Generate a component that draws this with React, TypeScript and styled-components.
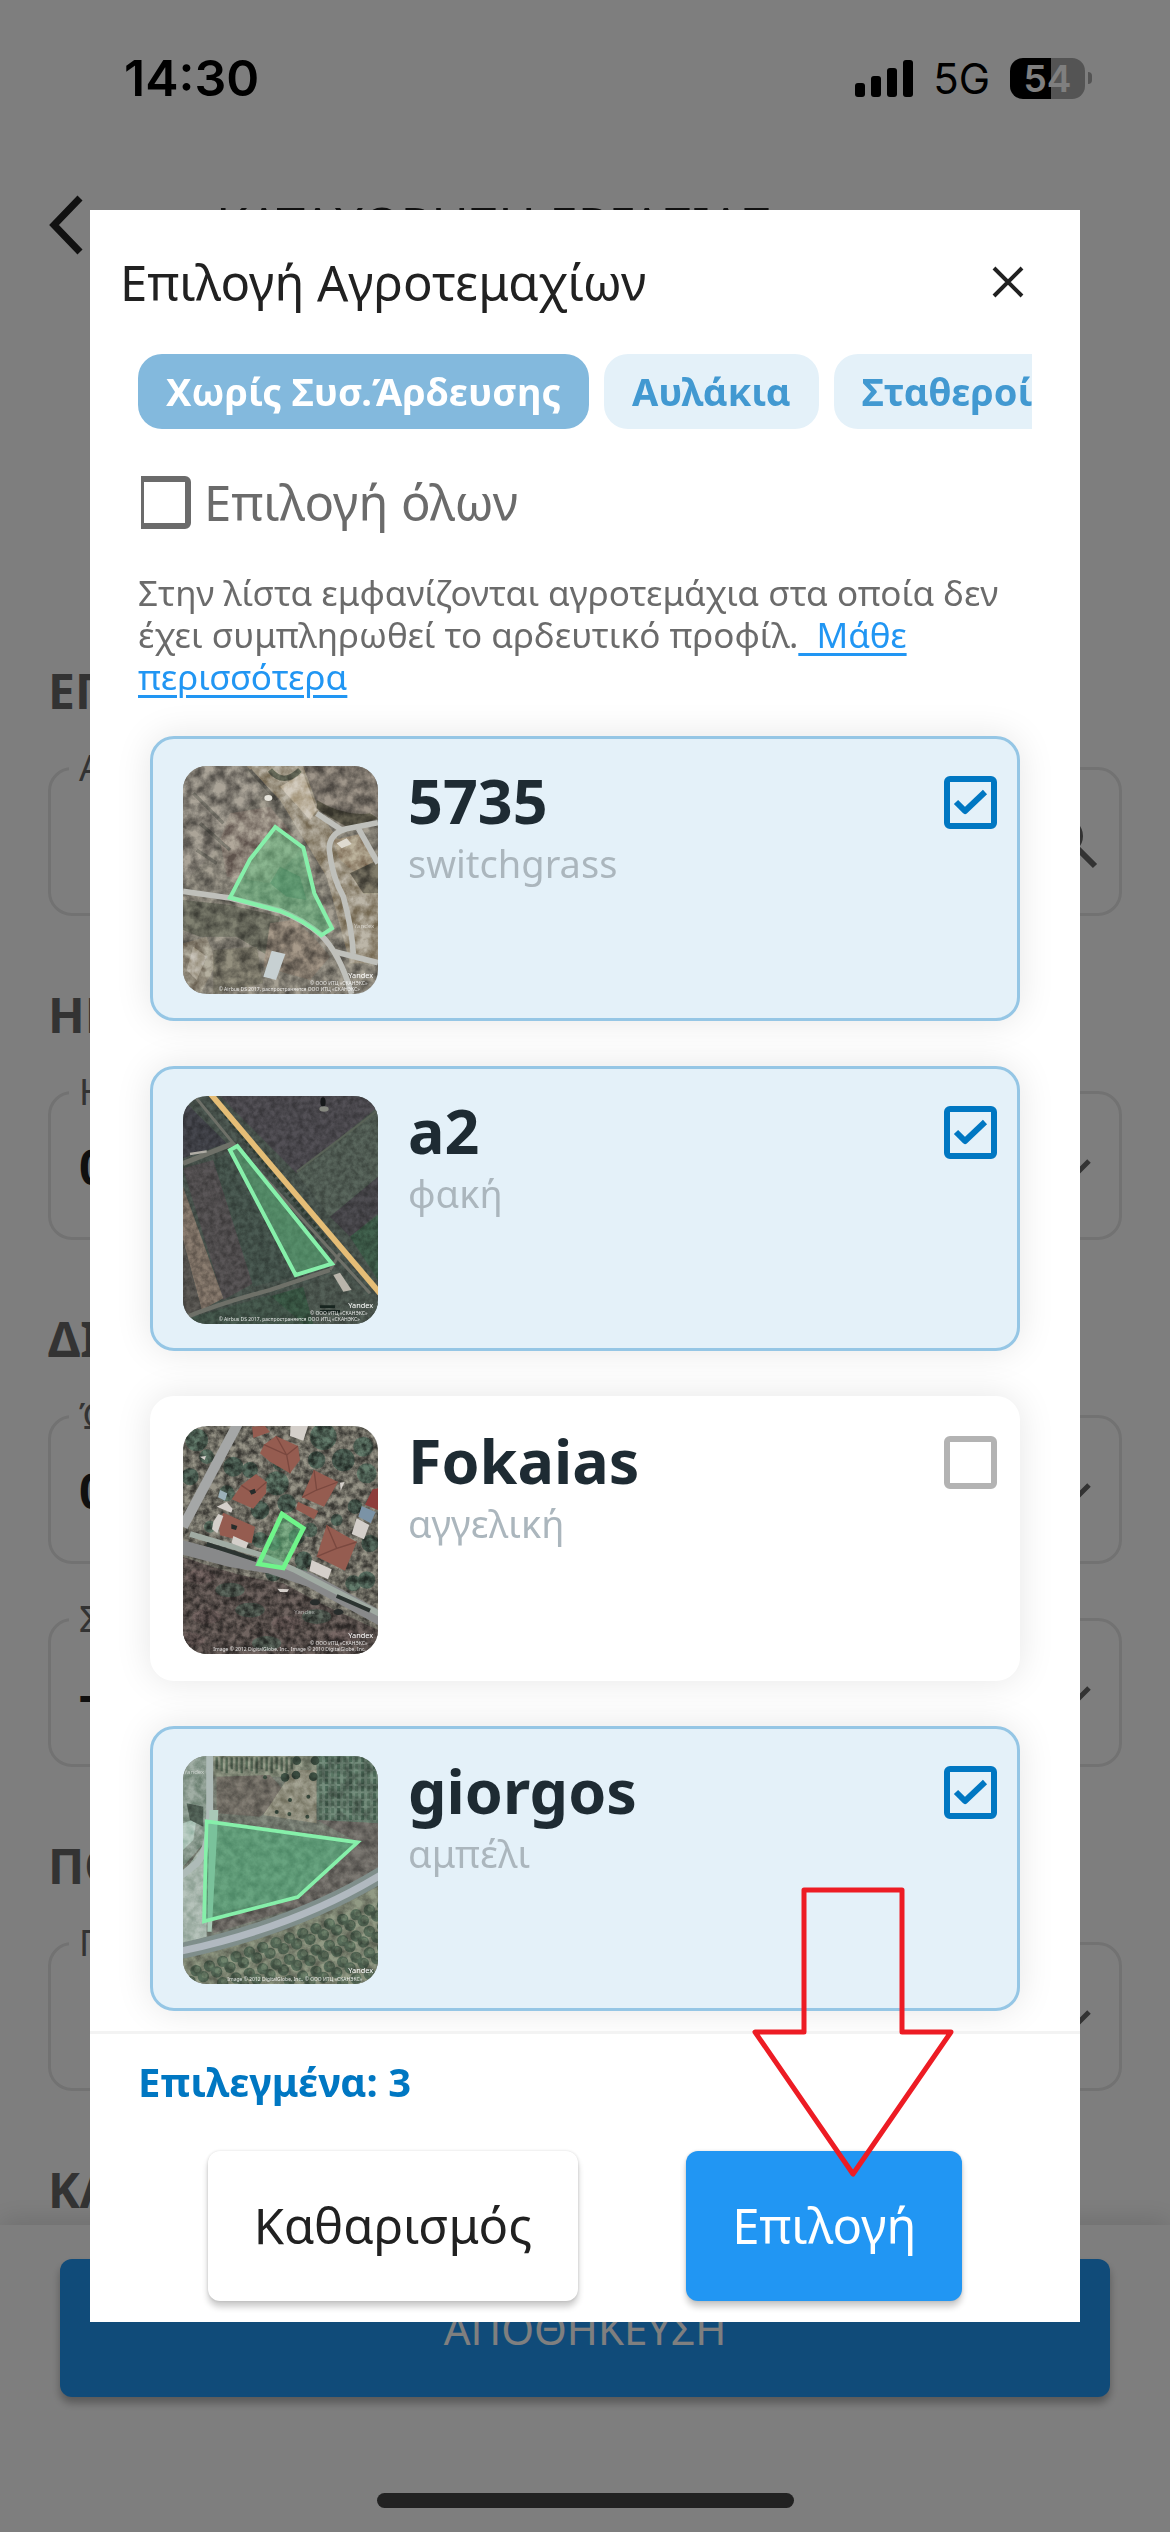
import React, { useState } from "react";
import styled, { createGlobalStyle } from "styled-components";

const GlobalStyle = createGlobalStyle`
  *, *::before, *::after { box-sizing: border-box; }
  body {
    margin: 0;
    background: #fdfdfd;
    font-family: "Noto Sans", "Open Sans", sans-serif;
    color: #212121;
  }
  button, input { font-family: inherit; }
  h1, h2, h3, p, ul { margin: 0; padding: 0; }
`;

/* ---------- page behind the dialog ---------- */

const Screen = styled.div`
  min-height: 100vh;
  display: flex;
  flex-direction: column;
  overflow: hidden;
`;

const StatusBar = styled.header`
  display: flex;
  align-items: center;
  justify-content: space-between;
  height: 156px;
  padding: 0 78px 0 124px;
  font-family: Inter, "Liberation Sans", sans-serif;
  color: #000;
`;

const Clock = styled.span`
  font-size: 50px;
  font-weight: 600;
`;

const StatusIcons = styled.div`
  display: flex;
  align-items: center;
  gap: 20px;
`;

const Network = styled.span`
  font-size: 42px;
  font-weight: 400;
`;

const Battery = styled.div`
  display: flex;
  align-items: center;
  gap: 3px;
`;

const BatteryBody = styled.span`
  width: 75px;
  height: 41px;
  border-radius: 13px;
  background: linear-gradient(90deg, #000 55%, #a8a8a8 55%);
  color: #fff;
  font-size: 37px;
  line-height: 41px;
  font-weight: 600;
  text-align: center;
`;

const BatteryTip = styled.span`
  width: 4px;
  height: 12px;
  border-radius: 0 4px 4px 0;
  background: #a8a8a8;
`;

const NavBar = styled.div`
  display: flex;
  align-items: center;
  height: 138px;
  padding: 0 48px;
  gap: 132px;
`;

const BackButton = styled.button`
  display: flex;
  padding: 0;
  border: 0;
  background: none;
`;

const NavTitle = styled.h1`
  font-size: 51px;
  font-weight: 400;
  line-height: 60px;
  white-space: nowrap;
  color: #222;
`;

const Form = styled.main`
  flex: 1;
  display: flex;
  flex-direction: column;
  gap: 77px;
  padding: 375px 48px 0;
`;

const Section = styled.section`
  display: flex;
  flex-direction: column;
  gap: 31px;
`;

const SectionTitle = styled.h2`
  font-size: 48px;
  font-weight: 700;
  line-height: 44px;
  color: #666;
`;

const Field = styled.fieldset`
  display: flex;
  align-items: flex-start;
  margin: 0;
  height: 172px;
  min-width: 0;
  padding: 18px 20px 0 18px;
  border: 3px solid #e4e4e4;
  border-radius: 24px;
`;

const FieldLegend = styled.legend`
  padding: 0 10px;
  font-size: 36px;
  line-height: 48px;
  color: #666;
`;

const FieldInput = styled.input`
  flex: 1;
  min-width: 0;
  height: 64px;
  padding: 0 0 0 10px;
  border: 0;
  outline: 0;
  background: transparent;
  font-size: 48px;
  font-weight: 700;
  color: #212121;
`;

const SaveBar = styled.footer`
  display: flex;
  flex-direction: column;
  align-items: center;
  justify-content: space-between;
  height: 307px;
  padding: 34px 60px 24px;
  background: #fdfdfd;
  box-shadow: 0 -6px 24px rgba(0, 0, 0, 0.12);
`;

const SaveButton = styled.button`
  width: 100%;
  height: 138px;
  border: 0;
  border-radius: 12px;
  background: #2196f3;
  color: #fff;
  font-size: 42px;
  box-shadow: 0 6px 9px rgba(0, 0, 0, 0.3);
`;

const HomeIndicator = styled.div`
  width: 417px;
  height: 15px;
  border-radius: 8px;
  background: #444;
`;

/* ---------- dialog ---------- */

const Scrim = styled.div`
  position: fixed;
  inset: 0;
  padding: 210px 90px;
  background: rgba(0, 0, 0, 0.5);
`;

const Dialog = styled.section`
  display: flex;
  flex-direction: column;
  height: 100%;
  background: #fff;
  overflow: hidden;
`;

const DialogHeader = styled.div`
  display: flex;
  align-items: center;
  justify-content: space-between;
  height: 144px;
  padding-left: 30px;
`;

const DialogTitle = styled.h2`
  font-size: 49px;
  font-weight: 400;
  line-height: 60px;
`;

const CloseButton = styled.button`
  display: grid;
  place-items: center;
  width: 144px;
  height: 144px;
  border: 0;
  background: none;
`;

const ChipRow = styled.div`
  display: flex;
  gap: 15px;
  margin: 0 48px;
  overflow: hidden;
`;

const Chip = styled.button<{ $active?: boolean }>`
  flex: none;
  height: 75px;
  padding: 0 28px 2px;
  border: 0;
  border-radius: 24px;
  background: ${(p) => (p.$active ? "#83b9dd" : "#e4f1f9")};
  color: ${(p) => (p.$active ? "#fff" : "#4299d1")};
  font-size: 38px;
  font-weight: 700;
  white-space: nowrap;
`;

const CheckBox = styled.input`
  appearance: none;
  flex: none;
  width: 53px;
  height: 53px;
  margin: 0;
  border: 6px solid ${(p) => (p.checked ? "#0077c2" : "#b3b3b3")};
  border-radius: 6px;
  background: ${(p) =>
    p.checked
      ? `url("data:image/svg+xml,%3Csvg xmlns='http://www.w3.org/2000/svg' viewBox='0 0 41 41'%3E%3Cpath d='M6 20 L15 29 L35 10' fill='none' stroke='%230077c2' stroke-width='6' stroke-linejoin='round'/%3E%3C/svg%3E") center / 41px 41px no-repeat`
      : "transparent"};
`;

const SelectAll = styled.label`
  display: flex;
  align-items: center;
  gap: 13px;
  height: 143px;
  margin: 0 48px;
  padding-top: 3px;
  font-size: 49px;
  color: #6b6b6b;

  ${CheckBox} {
    width: 50px;
    margin-left: 3px;
    border-color: #6b6b6b;
    border-left-width: 3px;
    border-radius: 0 6px 6px 0;
  }
`;

const Hint = styled.p`
  margin: 0 48px;
  font-size: 35px;
  line-height: 42px;
  color: #6b6b6b;
`;

const HintLink = styled.a`
  color: #2196f3;
  text-decoration: underline;
  text-decoration-thickness: 3px;
  text-underline-offset: 5px;
`;

const PlotList = styled.ul`
  flex: 1;
  min-height: 0;
  display: flex;
  flex-direction: column;
  gap: 45px;
  padding: 38px 60px 0;
  overflow: hidden;
  list-style: none;
`;

const PlotCard = styled.li<{ $selected: boolean }>`
  flex: none;
  border: 3px solid ${(p) => (p.$selected ? "#95c6e5" : "#fff")};
  border-radius: 24px;
  background: ${(p) => (p.$selected ? "#e4f1f9" : "#fff")};
  box-shadow: 0 0 36px rgba(0, 0, 0, 0.1);
`;

const PlotLabel = styled.label`
  display: flex;
  align-items: flex-start;
  height: 279px;
  padding: 27px 20px 24px 30px;
`;

const Thumb = styled.svg`
  flex: none;
  width: 195px;
  height: 228px;
  border-radius: 24px;
`;

const GrainRect = styled.rect`
  mix-blend-mode: overlay;
`;

const PlotText = styled.div`
  flex: 1;
  min-width: 0;
  margin: 0 30px;
`;

const PlotName = styled.h3`
  font-size: 61px;
  font-weight: 700;
  line-height: 70px;
  color: #1e2b33;
`;

const PlotCrop = styled.p`
  font-size: 38px;
  line-height: 54px;
  color: #abb6bd;
`;

const CheckSlot = styled.span`
  display: flex;
  padding-top: 10px;
`;

const DialogFooter = styled.div`
  height: 291px;
  border-top: 3px solid #f3f3f3;
`;

const Count = styled.p`
  height: 117px;
  padding: 0 48px;
  font-size: 40px;
  font-weight: 700;
  line-height: 96px;
  color: #0077c2;
`;

const Actions = styled.div`
  display: flex;
  justify-content: center;
  gap: 108px;
`;

const ActionButton = styled.button<{ $primary?: boolean }>`
  height: 150px;
  padding: 0 46px 2px;
  border: 0;
  border-radius: 12px;
  background: ${(p) => (p.$primary ? "#2196f3" : "#fff")};
  color: ${(p) => (p.$primary ? "#fff" : "#212121")};
  font-size: 49px;
  box-shadow: 0 6px 6px rgba(0, 0, 0, 0.2), 0 0 3px rgba(0, 0, 0, 0.15);
`;

const Arrow = styled.svg`
  position: fixed;
  left: 751px;
  top: 1885px;
  width: 204px;
  height: 296px;
  pointer-events: none;
`;

/* ---------- satellite thumbnails ---------- */

type Line = [number, number, string];

const Credit = ({ lines, yandexY = 683 }: { lines: Line[]; yandexY?: number }) => (
  <g fontFamily="Noto Sans, sans-serif" fill="#fff">
    <text x="535" y={yandexY} fontSize="22">Yandex</text>
    {lines.map(([x, y, t]) => (
      <text key={y} x={x} y={y} fontSize="15" opacity="0.85">{t}</text>
    ))}
  </g>
);

const Grain = ({ id, freq, seed, strength }: { id: string; freq: number; seed: number; strength: number }) => (
  <>
    <filter id={id} x="0" y="0" width="100%" height="100%" colorInterpolationFilters="sRGB">
      <feTurbulence type="fractalNoise" baseFrequency={freq} numOctaves={4} seed={seed} />
      <feColorMatrix type="matrix" values="2 0 0 0 -0.45  2 0 0 0 -0.45  2 0 0 0 -0.45  0 0 0 0 1" />
    </filter>
    <GrainRect x="39" y="48" width="585" height="684" filter={`url(#${id})`} opacity={strength} />
  </>
);

const parcel = { stroke: "#86f0aa", strokeWidth: 12, fill: "#5fca86", fillOpacity: 0.45 };

const MapHill = () => (
  <Thumb viewBox="39 48 585 684" aria-hidden="true">
    <rect x="39" y="48" width="585" height="684" fill="#7b776d" />
    <path d="M39 48H210L280 120L210 190L120 320L39 400Z" fill="#7f7a71" />
    <path d="M180 190L300 170L400 290L300 400L170 380L150 270Z" fill="#877d73" />
    <path d="M230 48H400L450 190L520 290L624 420V640H540L470 380L330 150Z" fill="#988f7d" />
    <path d="M330 110L400 70L440 180L420 210Z" fill="#bbb09c" />
    <path d="M400 48H624V200L530 235L450 180Z" fill="#766f66" />
    <path d="M440 150Q520 200 600 190L624 205L540 235Q470 200 440 175Z" fill="#504d40" />
    <path d="M490 270L580 250L610 340L560 370L510 330Z" fill="#988a74" />
    <path d="M540 370L624 330V430L580 430Z" fill="#5f5b4e" />
    <path d="M39 450L180 465L330 500L300 620L200 560L90 560L39 540Z" fill="#5f6054" />
    <path d="M300 520L370 510L430 560L480 620L420 690L280 650Z" fill="#7c7266" />
    <path d="M39 580L110 560L140 640L90 732H39Z" fill="#8d8677" />
    <path d="M70 590L110 620L80 690L50 660Z" fill="#aca596" />
    <path d="M130 600L260 590L280 700L130 732Z" fill="#6e6b5e" />
    <path d="M240 60L320 150M70 130L160 220M90 220L180 300M80 300L140 340" stroke="#615f57" strokeWidth="10" fill="none" />
    <path d="M300 60Q340 110 390 60" stroke="#55584a" strokeWidth="16" fill="none" />
    <Grain id="g1" freq={0.03} seed={4} strength={0.35} />
    <path d="M280 680L305 602L346 612L318 690Z" fill="#c7d0d2" />
    <ellipse cx="295" cy="144" rx="12" ry="9" fill="#e6e4dc" />
    <path d="M500 280L530 265L545 282L515 295Z" fill="#dedad0" />
    <g fill="none" stroke="#bfc0bb" strokeWidth="17">
      <path d="M39 424L180 444L330 482Q400 510 450 552Q510 610 545 732" />
      <path d="M624 218L530 236Q476 250 478 300Q486 380 520 440Q545 530 550 612" />
      <path d="M565 235L624 340" />
      <path d="M495 605L624 638" />
      <path d="M440 190L515 240" />
    </g>
    <path d="M316 231L400 293L433 430L486 535L454 556Q400 510 330 483L180 443L240 328Z" {...parcel} />
    <path d="M330 350L390 380L410 450L350 440L300 400Z" fill="#2d7d52" opacity="0.3" />
    <text x="552" y="534" fontSize="18" fill="#fff" opacity="0.5" fontFamily="Noto Sans, sans-serif">Yandex</text>
    <Credit lines={[[420, 706, "© ООО ИТЦ «СКАНЭКС»"], [146, 724, "© Airbus DS 2017, распространяется ООО ИТЦ «СКАНЭКС»"]]} />
  </Thumb>
);

const MapFields = () => (
  <Thumb viewBox="39 48 585 684" aria-hidden="true">
    <rect x="39" y="48" width="585" height="684" fill="#444e48" />
    <path d="M150 48H624V80L380 280Z" fill="#464449" />
    <path d="M380 280L624 90V290L480 410Z" fill="#4c574f" />
    <path d="M480 410L624 290V400L540 470Z" fill="#424145" />
    <path d="M540 470L624 405V600Z" fill="#385443" />
    <path d="M39 60L170 190L39 235Z" fill="#3b3c42" />
    <path d="M39 265L130 240L250 610L160 660Z" fill="#4c494a" />
    <path d="M130 240L180 215L370 590L250 620Z" fill="#3f4d46" />
    <path d="M39 320L160 655L95 690L39 480Z" fill="#766a5f" />
    <path d="M39 480L95 690L39 710Z" fill="#504e4a" />
    <path d="M280 655L400 620L430 732H290Z" fill="#344f3e" />
    <path d="M39 720L300 645L400 732H39Z" fill="#3d4e44" />
    <path d="M400 620L500 570L624 670V732H430Z" fill="#47514a" />
    <Grain id="g2" freq={0.06} seed={9} strength={0.18} />
    <g fill="none" stroke="#6e7068" strokeWidth="9">
      <path d="M75 50L190 190L600 640" />
      <path d="M39 250L190 190" strokeWidth="15" />
      <path d="M39 715Q150 670 300 630L480 570" strokeWidth="13" />
      <path d="M380 275L624 90" strokeWidth="6" stroke="#596257" />
      <path d="M480 570L510 520" />
    </g>
    <path d="M60 222L110 214" stroke="#b0ada5" strokeWidth="7" />
    <path d="M490 585L510 578L545 630L520 635Z" fill="#b9b5ab" />
    <ellipse cx="459" cy="66" rx="8" ry="14" fill="#16181a" />
    <ellipse cx="462" cy="87" rx="14" ry="8" fill="#85877f" />
    <path d="M450 680h45M450 694h60" stroke="#17241f" strokeWidth="8" />
    <path d="M155 92L470 480" stroke="#2c3a31" strokeWidth="10" strokeDasharray="10 9" />
    <path d="M122 42L630 640" stroke="#e5bd76" strokeWidth="17" />
    <path d="M202 198L486 551L377 585L180 210Z" {...parcel} />
    <Credit lines={[[420, 706, "© ООО ИТЦ «СКАНЭКС»"], [146, 724, "© Airbus DS 2017, распространяется ООО ИТЦ «СКАНЭКС»"]]} />
  </Thumb>
);

const trees: [number, number, number][] = [
  [80, 90, 34], [60, 200, 26], [110, 140, 22], [190, 170, 30], [170, 250, 24], [240, 180, 24], [320, 220, 36], [350, 280, 28],
  [460, 80, 40], [520, 150, 34], [580, 110, 30], [440, 150, 26], [590, 190, 30], [555, 290, 22], [330, 160, 22], [270, 300, 28],
  [270, 390, 24], [380, 380, 24], [420, 360, 22], [400, 450, 26], [550, 520, 24], [590, 510, 26], [120, 350, 18], [600, 400, 26],
  [310, 400, 22], [500, 330, 18], [390, 490, 24], [310, 490, 24], [130, 430, 16],
];

const shrubs: [number, number][] = [
  [90, 500], [180, 540], [110, 620], [240, 600], [350, 640], [440, 620], [520, 680], [290, 700], [60, 690],
];

const MapHouses = () => (
  <Thumb viewBox="39 48 585 684" aria-hidden="true">
    <rect x="39" y="48" width="585" height="684" fill="#68665d" />
    <path d="M39 440Q200 500 340 520L450 580L624 660V732H39Z" fill="#4d4542" />
    {trees.map(([x, y, r], i) => (
      <circle key={i} cx={x} cy={y} r={r} fill={i % 2 ? "#3c4b42" : "#45564b"} />
    ))}
    {shrubs.map(([x, y], i) => (
      <ellipse key={i} cx={x} cy={y} rx="44" ry="22" fill={i % 2 ? "#414942" : "#524745"} />
    ))}
    <Grain id="g3" freq={0.05} seed={12} strength={0.45} />
    <path d="M204 40L39 350" stroke="#a5a7a7" strokeWidth="30" fill="none" />
    <path d="M30 410L180 450L300 470L420 510L640 630" stroke="#88898a" strokeWidth="42" fill="none" />
    <path d="M60 372L270 434L370 478L500 545L630 612" stroke="#a0aba3" strokeWidth="17" fill="none" />
    <path d="M110 402L260 450M500 558L600 602" stroke="#2c3431" strokeWidth="12" fill="none" />
    <g fill="#955c50">
      <path d="M246 50L285 48L300 66L250 84Z" />
      <path d="M282 104L318 78L384 108L390 150L360 190L300 155L270 130Z" />
      <path d="M214 226L258 192L290 216L288 250L250 296L185 268Z" />
      <path d="M146 335L160 308L255 350L245 400L150 376Z" />
      <path d="M432 180L504 216L462 290L396 262Z" />
      <path d="M384 275L445 303L432 328L378 298Z" />
      <path d="M470 345L560 396L525 482L440 440Z" />
      <path d="M608 238L624 235V300L585 284Z" fill="#8e3d3b" />
    </g>
    <g stroke="#7a483f" strokeWidth="4" fill="none">
      <path d="M282 104L350 135L360 190M318 78L350 135L384 108" />
      <path d="M432 180L440 240L504 216M440 240L396 262" />
      <path d="M470 345L500 415L560 396M500 415L440 440M214 226L250 250L290 216" />
    </g>
    <g fill="#d4cfca">
      <path d="M362 48H414L400 92L360 78Z" />
      <path d="M190 378L235 398L228 416L184 400Z" />
      <path d="M425 450L485 478L474 508L418 482Z" />
      <path d="M560 325L598 345L582 388L545 372Z" />
      <path d="M130 335L145 312L160 318L142 370L126 358Z" />
      <path d="M170 276L188 296L184 308L140 290Z" />
      <path d="M322 536L357 538L352 546L330 546Z" />
      <path d="M90 140L108 138L104 150Z" />
      <path d="M510 218L524 216L512 242Z" />
    </g>
    <path d="M575 288L617 306L602 340L565 320Z" fill="#7b93a6" />
    <path d="M150 240L172 250L165 272L144 262Z" fill="#9bb0b8" />
    <g fill="#272c2b">
      <ellipse cx="435" cy="577" rx="15" ry="9" />
      <ellipse cx="505" cy="606" rx="15" ry="9" />
      <path d="M238 242L254 236L258 248L244 254Z" />
      <path d="M184 342L202 348L198 360L184 356Z" />
    </g>
    <path d="M336 312L400 355L340 474L266 462Z" {...parcel} stroke="#6ff58a" strokeWidth={14} />
    <text x="373" y="611" fontSize="18" fill="#fff" opacity="0.5" fontFamily="Noto Sans, sans-serif">Yandex</text>
    <Credit lines={[[420, 706, "© ООО ИТЦ «СКАНЭКС»"], [130, 724, "Image © 2012 DigitalGlobe, Inc., Image © 2010 DigitalGlobe, Inc."]]} />
  </Thumb>
);

const bushes: [number, number][] = [];
for (let row = 0; row < 8; row++) {
  for (let col = 0; col < 15; col++) {
    const x = 60 + col * 40 + (row % 2) * 18;
    const y = 660 - col * 14 + row * 32;
    if (y < 735 && y > 668 - (x - 39) * 0.3) bushes.push([x, y]);
  }
}

const orchard: [number, number, number][] = [
  [345, 112, 13], [378, 105, 13], [430, 110, 13], [435, 62, 13], [380, 62, 13],
  [415, 170, 6], [360, 180, 6], [320, 216, 6], [358, 222, 6], [412, 230, 6], [285, 112, 6],
];

const MapVineyard = () => (
  <Thumb viewBox="39 48 585 684" aria-hidden="true">
    <rect x="39" y="48" width="585" height="684" fill="#6d7369" />
    <path d="M130 48H440V110L130 110Z" fill="#7d8473" />
    <path d="M140 110L300 105L350 160L270 230L140 220Z" fill="#6a665e" />
    <path d="M370 90H440V250L280 225Z" fill="#8b8a79" />
    <path d="M440 48H624V250L440 240Z" fill="#5f7466" />
    <path d="M440 240L624 250V400L390 500L130 580V520L380 470L560 305Z" fill="#66635e" />
    <path d="M39 48H110V300L39 380Z" fill="#86978b" />
    <path d="M39 250L80 235L70 300L39 330Z" fill="#a9c1b5" />
    <path d="M50 190L100 200V260L60 240Z" fill="#4b5a50" />
    <path d="M39 400L110 300V590L39 610Z" fill="#a2b2a8" />
    <path d="M39 640L330 575L624 440V732H39Z" fill="#777e6c" />
    {Array.from({ length: 16 }, (_, i) => (
      <path key={i} d={`M${140 + i * 15} 52V${88 + (i % 3) * 6}`} stroke="#4b5b4b" strokeWidth="7" />
    ))}
    {Array.from({ length: 10 }, (_, i) => (
      <path key={i} d={`M${452 + i * 18} 50V240`} stroke={i % 2 ? "#3f5849" : "#4a6152"} strokeWidth="9" strokeDasharray="16 6" />
    ))}
    {bushes.map(([x, y]) => (
      <g key={`${x}-${y}`}>
        <circle cx={x} cy={y} r="17" fill="#495b4b" />
        <circle cx={x + 4} cy={y - 4} r="9" fill="#5b6c59" />
      </g>
    ))}
    {orchard.map(([x, y, r], i) => (
      <circle key={i} cx={x} cy={y} r={r} fill="#35453a" />
    ))}
    <Grain id="g4" freq={0.04} seed={21} strength={0.22} />
    <path d="M119 40V220Q118 330 80 370L30 410" stroke="#aebbb8" strokeWidth="21" fill="none" />
    <path d="M145 210L125 575L112 575L118 210Z" fill="#a9c9b7" />
    <path d="M30 634Q380 560 640 400" stroke="#7f8e8b" strokeWidth="48" fill="none" />
    <path d="M30 634Q380 560 640 400" stroke="#b1b9c0" strokeWidth="21" fill="none" />
    <path d="M110 244L563 307L383 471L102 544Z" fill="#4cbb80" fillOpacity="0.5" stroke="#86f0aa" strokeWidth="11" />
    <text x="42" y="103" fontSize="18" fill="#fff" opacity="0.5" fontFamily="Noto Sans, sans-serif">Yandex</text>
    <Credit yandexY={698} lines={[[172, 724, "Image © 2012 DigitalGlobe, Inc., © ООО ИТЦ «СКАНЭКС»"]]} />
  </Thumb>
);

/* ---------- data ---------- */

const plots = [
  { id: "5735", crop: "switchgrass", selected: true, Map: MapHill },
  { id: "a2", crop: "φακή", selected: true, Map: MapFields },
  { id: "Fokaias", crop: "αγγελική", selected: false, Map: MapHouses },
  { id: "giorgos", crop: "αμπέλι", selected: true, Map: MapVineyard },
];

const sections = [
  { title: "ΕΠ", fields: [{ label: "Α", value: "", icon: "search" }] },
  { title: "ΗΜ", fields: [{ label: "Η", value: "0", icon: "chevron" }] },
  {
    title: "ΔΙ",
    fields: [
      { label: "Ώ", value: "0", icon: "chevron" },
      { label: "Σ", value: "-", icon: "chevron" },
    ],
  },
  { title: "ΠΟ", fields: [{ label: "Π", value: "", icon: "chevron" }] },
  { title: "ΚΑ", fields: [] },
];

const FieldIcon = ({ kind }: { kind: string }) =>
  kind === "search" ? (
    <svg width="54" height="64" viewBox="0 -6 54 64" fill="none" stroke="#666" strokeWidth="6">
      <circle cx="20" cy="20" r="15" />
      <path d="M31 31L50 50" />
    </svg>
  ) : (
    <svg width="54" height="64" viewBox="0 -7 54 64" fill="none" stroke="#666" strokeWidth="5">
      <path d="M18 20L31 33L44 20" />
    </svg>
  );

export default function App() {
  const [selected, setSelected] = useState(() => plots.filter((p) => p.selected).map((p) => p.id));
  const toggle = (id: string) =>
    setSelected((s) => (s.includes(id) ? s.filter((x) => x !== id) : [...s, id]));
  const all = selected.length === plots.length;

  return (
    <>
      <GlobalStyle />
      <Screen>
        <StatusBar>
          <Clock>14:30</Clock>
          <StatusIcons>
            <svg width="58" height="37" viewBox="0 0 58 37">
              <rect x="0" y="23" width="10" height="14" rx="3" />
              <rect x="16" y="16" width="10" height="21" rx="3" />
              <rect x="32" y="8" width="10" height="29" rx="3" />
              <rect x="48" y="0" width="10" height="37" rx="3" />
            </svg>
            <Network>5G</Network>
            <Battery>
              <BatteryBody>54</BatteryBody>
              <BatteryTip />
            </Battery>
          </StatusIcons>
        </StatusBar>
        <NavBar>
          <BackButton aria-label="Πίσω">
            <svg width="36" height="60" viewBox="0 0 36 60" fill="none" stroke="#222" strokeWidth="7">
              <path d="M32 3L6 30L32 57" />
            </svg>
          </BackButton>
          <NavTitle>ΚΑΤΑΧΩΡΗΣΗ ΕΡΓΑΣΙΑΣ</NavTitle>
        </NavBar>
        <Form>
          {sections.map((s) => (
            <Section key={s.title}>
              <SectionTitle>{s.title}</SectionTitle>
              {s.fields.map((f) => (
                <Field key={f.label}>
                  <FieldLegend>{f.label}</FieldLegend>
                  <FieldInput aria-label={f.label} defaultValue={f.value} />
                  <FieldIcon kind={f.icon} />
                </Field>
              ))}
            </Section>
          ))}
        </Form>
        <SaveBar>
          <SaveButton>ΑΠΟΘΗΚΕΥΣΗ</SaveButton>
          <HomeIndicator />
        </SaveBar>
      </Screen>

      <Scrim>
        <Dialog role="dialog" aria-modal="true" aria-labelledby="dialog-title">
          <DialogHeader>
            <DialogTitle id="dialog-title">Επιλογή Αγροτεμαχίων</DialogTitle>
            <CloseButton aria-label="Κλείσιμο">
              <svg width="32" height="32" viewBox="0 0 32 32" stroke="#212121" strokeWidth="4">
                <path d="M2 2L30 30M30 2L2 30" />
              </svg>
            </CloseButton>
          </DialogHeader>
          <ChipRow>
            <Chip $active>Χωρίς Συσ.Άρδευσης</Chip>
            <Chip>Αυλάκια</Chip>
            <Chip>Σταθεροί</Chip>
          </ChipRow>
          <SelectAll>
            <CheckBox
              type="checkbox"
              checked={all}
              onChange={() => setSelected(all ? [] : plots.map((p) => p.id))}
            />
            Επιλογή όλων
          </SelectAll>
          <Hint>
            Στην λίστα εμφανίζονται αγροτεμάχια στα οποία δεν έχει συμπληρωθεί το αρδευτικό προφίλ.
            <HintLink href="#more">{"\u00a0\u00a0Μάθε περισσότερα"}</HintLink>
          </Hint>
          <PlotList>
            {plots.map(({ id, crop, Map }) => (
              <PlotCard key={id} $selected={selected.includes(id)}>
                <PlotLabel>
                  <Map />
                  <PlotText>
                    <PlotName>{id}</PlotName>
                    <PlotCrop>{crop}</PlotCrop>
                  </PlotText>
                  <CheckSlot>
                    <CheckBox type="checkbox" checked={selected.includes(id)} onChange={() => toggle(id)} />
                  </CheckSlot>
                </PlotLabel>
              </PlotCard>
            ))}
          </PlotList>
          <DialogFooter>
            <Count>Επιλεγμένα: {selected.length}</Count>
            <Actions>
              <ActionButton onClick={() => setSelected([])}>Καθαρισμός</ActionButton>
              <ActionButton $primary>Επιλογή</ActionButton>
            </Actions>
          </DialogFooter>
        </Dialog>
      </Scrim>

      <Arrow viewBox="751 1885 204 296" aria-hidden="true" fill="none" stroke="#ed1c24" strokeWidth="5" strokeLinejoin="round">
        <path d="M804 1890H902V2032H951L853 2174L755 2032H804Z" />
      </Arrow>
    </>
  );
}
